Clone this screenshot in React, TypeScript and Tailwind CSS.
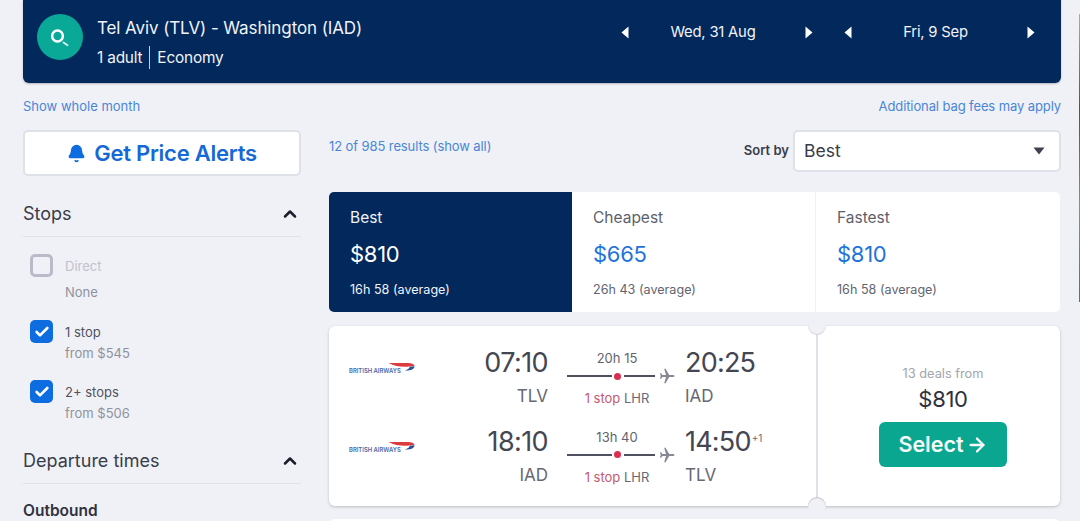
import { Bell, ChevronUp, ArrowRight, Check } from "lucide-react";

const font = { fontFamily: "Inter, 'Noto Sans', sans-serif" };

function Caret({ dir }: { dir: "left" | "right" }) {
  return (
    <svg width="8" height="13" viewBox="0 0 8 13" className="shrink-0">
      <path
        d={dir === "left" ? "M7.5 0.5V12.5L0.5 6.5Z" : "M0.5 0.5V12.5L7.5 6.5Z"}
        fill="#ffffff"
      />
    </svg>
  );
}

function DatePicker({ label, width }: { label: string; width: string }) {
  return (
    <div className={`flex items-center justify-between ${width}`}>
      <Caret dir="left" />
      <span className="mr-[8px] text-[14.8px] tracking-[-0.2px] text-[#f1f3f8]">{label}</span>
      <Caret dir="right" />
    </div>
  );
}

function StopOption({
  label,
  sub,
  checked,
  disabled,
}: {
  label: string;
  sub: string;
  checked?: boolean;
  disabled?: boolean;
}) {
  return (
    <div className="flex gap-[12px] pl-[7px]">
      {checked ? (
        <div className="flex h-[23px] w-[23px] items-center justify-center rounded-[5px] bg-[#0d6ce0]">
          <Check className="h-[16px] w-[16px] text-white" strokeWidth={4} />
        </div>
      ) : (
        <div className="h-[23px] w-[23px] rounded-[5px] border-[3px] border-[#b9bcc8]" />
      )}
      <div className="pt-[4px]">
        <div className={`text-[13px] leading-[17px] ${disabled ? "text-[#bfc2cc]" : "text-[#50535f]"}`}>{label}</div>
        <div className={`text-[13px] leading-[17px] text-[#8f929d] ${disabled ? "mt-[9px]" : "mt-[4px]"}`}>{sub}</div>
      </div>
    </div>
  );
}

function FilterHeading({ label }: { label: string }) {
  return (
    <div className="flex h-[35px] items-start justify-between border-b border-[#dfe1e8]">
      <span className="text-[18px] leading-[24px] text-[#3a3c48]">{label}</span>
      <ChevronUp className="mr-[1px] mt-[2px] h-[20px] w-[20px] text-[#1b1d2c]" strokeWidth={3} />
    </div>
  );
}

function PriceTab({ title, price, time, active }: { title: string; price: string; time: string; active?: boolean }) {
  return (
    <div className={`flex-1 pl-[21px] pt-[16px] ${active ? "bg-[#02285c]" : "bg-white"}`}>
      <div className={`text-[15.5px] leading-[20px] ${active ? "text-[#f1f3f8]" : "text-[#5d5f6b]"}`}>{title}</div>
      <div className={`mt-[12px] text-[22px] leading-[28px] tracking-[-0.3px] ${active ? "text-white" : "text-[#1f73dc]"}`}>{price}</div>
      <div className={`mt-[13px] text-[12.6px] leading-[18px] ${active ? "text-[#f1f3f8]" : "text-[#62646f]"}`}>{time}</div>
    </div>
  );
}

function AirlineLogo() {
  return (
    <div className="relative h-[16px] w-[66px]">
      <span className="absolute left-0 top-[4px] whitespace-nowrap text-[5.9px] font-semibold leading-[8px] text-[#4a68a6]">
        BRITISH AIRWAYS
      </span>
      <svg width="27" height="10" viewBox="0 0 27 10" className="absolute left-[39px] top-[-1px]">
        <path d="M0.5 1H20C24 1 26 2 26.5 4L21 4.6C14 5.2 7 4.5 0.5 1Z" fill="#dc3b40" />
        <path d="M26.5 4.2C26.5 7.2 23 8.6 16.5 8.4C20 7.6 21.8 6.4 21.5 4.8Z" fill="#2a4f94" />
      </svg>
    </div>
  );
}

function PlaneRight() {
  return (
    <svg width="16" height="16" viewBox="0 0 16 16" className="ml-[4px] shrink-0">
      <path
        d="M15.5 8C15.5 7.2 14.6 6.9 13.6 6.9H10.2L6.6 0.8H5.2L7 6.9H3.4L2 5.2H0.9L1.7 8L0.9 10.8H2L3.4 9.1H7L5.2 15.2H6.6L10.2 9.1H13.6C14.6 9.1 15.5 8.8 15.5 8Z"
        fill="#868894"
      />
    </svg>
  );
}

function Leg({
  depart,
  from,
  duration,
  arrive,
  to,
  plus,
}: {
  depart: string;
  from: string;
  duration: string;
  arrive: string;
  to: string;
  plus?: string;
}) {
  return (
    <div className="flex h-[78.5px] items-start">
      <div className="mt-[16px] w-[105px] shrink-0">
        <AirlineLogo />
      </div>
      <div className="w-[94px] shrink-0 text-right">
        <div className="text-[27px] leading-[32px] tracking-[-0.6px] text-[#444652]">{depart}</div>
        <div className="mt-[7px] text-[17px] leading-[20px] text-[#666873]">{from}</div>
      </div>
      <div className="ml-[19px] w-[100px] shrink-0">
        <div className="mt-[3px] text-center text-[13px] leading-[16px] text-[#62646f]">{duration}</div>
        <div className="mt-[2px] flex h-[16px] items-center">
          <div className="h-[2px] w-[45px] shrink-0 bg-[#4f5161]" />
          <div className="ml-[2px] mr-[3px] h-[7px] w-[7px] shrink-0 rounded-full bg-[#d9304f]" />
          <div className="h-[2px] w-[31px] shrink-0 bg-[#4f5161]" />
          <PlaneRight />
        </div>
        <div className="mt-[5px] whitespace-nowrap text-center text-[13px] leading-[18px]">
          <span className="text-[#c45a72]">1 stop</span> <span className="text-[#666873]">LHR</span>
        </div>
      </div>
      <div className="ml-[18px]">
        <div className="whitespace-nowrap text-[27px] leading-[32px] tracking-[-0.8px] text-[#444652]">
          {arrive}
          {plus && <sup className="top-[-9px] ml-[1px] text-[10px] tracking-normal text-[#666873]">{plus}</sup>}
        </div>
        <div className="mt-[7px] text-[17px] leading-[20px] text-[#666873]">{to}</div>
      </div>
    </div>
  );
}

export default function App() {
  return (
    <div className="relative h-[521px] w-[1080px] overflow-hidden bg-[#f0f1f7] pl-[23px] pr-[19px]" style={font}>
      <div className="absolute right-0 top-[14px] h-[288px] w-px bg-[linear-gradient(180deg,#c9a56b,#5a5040,#8a9080,#3a7a8a)]" />

      {/* Search summary */}
      <div className="flex h-[83px] items-start justify-between rounded-b-[6px] bg-[#02285c] pl-[14px] pr-[26px] shadow-[0_1px_2px_rgba(0,0,0,0.25)]">
        <div className="flex items-start">
          <div className="mt-[14px] flex h-[46px] w-[46px] items-center justify-center rounded-full bg-[#0aa897]">
            <svg width="20" height="20" viewBox="0 0 20 20" fill="none">
              <circle cx="7.5" cy="9" r="5.4" stroke="#fff" strokeWidth="2.5" />
              <path d="M13.5 15.5L17.5 18.2" stroke="#dff3f0" strokeWidth="1.8" strokeLinecap="round" />
            </svg>
          </div>
          <div className="ml-[14px] pt-[17px] text-[#f1f3f8]">
            <div className="whitespace-nowrap text-[17px] leading-[22px] tracking-[-0.1px]">Tel Aviv (TLV) - Washington (IAD)</div>
            <div className="mt-[7px] flex items-center text-[15.4px] leading-[22px] tracking-[-0.2px]">
              <span>1 adult</span>
              <div className="mx-[7px] h-[23px] w-px bg-[#c9cedb]" />
              <span>Economy</span>
            </div>
          </div>
        </div>
        <div className="flex items-center gap-[31px] pt-[21px]">
          <DatePicker label="Wed, 31 Aug" width="w-[192px]" />
          <DatePicker label="Fri, 9 Sep" width="w-[191px]" />
        </div>
      </div>

      <div className="flex h-[47px] items-center justify-between pt-[1px] text-[13px] text-[#4a86d6]">
        <span>Show whole month</span>
        <span className="tracking-[-0.1px]">Additional bag fees may apply</span>
      </div>

      <div className="flex gap-[28px]">
        {/* Filters */}
        <div className="w-[278px] shrink-0">
          <div className="flex h-[46px] items-center justify-center gap-[8px] rounded-[5px] border-2 border-[#dfe1e8] bg-white text-[22px] font-semibold tracking-[-0.25px] text-[#1569d6]">
            <Bell className="h-[19px] w-[19px] fill-[#0d6ce0] text-[#0d6ce0]" />
            Get Price Alerts
          </div>
          <div className="mt-[26px]">
            <FilterHeading label="Stops" />
          </div>
          <div className="mt-[17px]">
            <div className="h-[66px]">
              <StopOption label="Direct" sub="None" disabled />
            </div>
            <div className="h-[60px]">
              <StopOption label="1 stop" sub="from $545" checked />
            </div>
            <div className="h-[60px]">
              <StopOption label="2+ stops" sub="from $506" checked />
            </div>
          </div>
          <div className="mt-[9px]">
            <FilterHeading label="Departure times" />
          </div>
          <div className="mt-[17px] text-[15.5px] font-semibold leading-[20px] text-[#2f3140]">Outbound</div>
        </div>

        {/* Results */}
        <div className="w-[732px] shrink-0">
          <div className="flex h-[62px] items-start justify-between">
            <span className="pt-[7px] text-[13px] leading-[18px] tracking-[-0.1px] text-[#4a86d6]">12 of 985 results (show all)</span>
            <div className="flex items-center gap-[4px]">
              <span className="text-[13px] font-semibold text-[#3a3c48]">Sort by</span>
              <div className="flex h-[42px] w-[268px] items-center justify-between rounded-[5px] border-2 border-[#dfe1e8] bg-white pl-[9px] pr-[14px]">
                <span className="pt-[1px] text-[17.5px] text-[#3a3c48]">Best</span>
                <svg width="12" height="8" viewBox="0 0 12 8">
                  <path d="M0.5 0.5H11.5L6 7.5Z" fill="#3f4150" />
                </svg>
              </div>
            </div>
          </div>

          <div className="flex h-[120px] w-[731px] overflow-hidden rounded-[5px]">
            <div className="flex w-[243px] shrink-0">
              <PriceTab title="Best" price="$810" time="16h 58 (average)" active />
            </div>
            <div className="flex w-[244px] shrink-0 border-r border-[#eff1f8]">
              <PriceTab title="Cheapest" price="$665" time="26h 43 (average)" />
            </div>
            <PriceTab title="Fastest" price="$810" time="16h 58 (average)" />
          </div>

          {/* Ticket */}
          <div className="relative mt-[14px] flex h-[180px] w-[731px] rounded-[6px] bg-white shadow-[0_1px_3px_rgba(37,32,31,0.25)]">
            <div className="w-[489px] shrink-0 border-r-2 border-[#dfe1e8] pl-[20px] pt-[21px]">
              <Leg depart="07:10" from="TLV" duration="20h 15" arrive="20:25" to="IAD" />
              <Leg depart="18:10" from="IAD" duration="13h 40" arrive="14:50" to="TLV" plus="+1" />
            </div>
            <div className="flex flex-1 flex-col items-center pl-[8px] pt-[39px]">
              <div className="text-[12.8px] leading-[18px] text-[#a3a5af]">13 deals from</div>
              <div className="mt-[2px] text-[22px] leading-[28px] tracking-[-0.3px] text-[#2f3140]">$810</div>
              <div className="mt-[9px] flex h-[45px] w-[128px] items-center justify-center gap-[2px] rounded-[6px] bg-[#0aa68f] text-[21.5px] font-semibold text-[#f5fbfa]">
                Select
                <ArrowRight className="h-[22px] w-[22px]" strokeWidth={2.5} />
              </div>
            </div>
            <div className="absolute left-[479px] top-[-9px] h-[18px] w-[18px] rounded-full bg-[#f0f1f7] shadow-[inset_0_-1px_1px_rgba(0,0,0,0.12)]" />
            <div className="absolute bottom-[-9px] left-[479px] h-[18px] w-[18px] rounded-full bg-[#f0f1f7] shadow-[inset_0_1px_1px_rgba(0,0,0,0.2)]" />
          </div>

          <div className="mt-[13px] h-[40px] w-[731px] rounded-[6px] bg-white" />
        </div>
      </div>
    </div>
  );
}
